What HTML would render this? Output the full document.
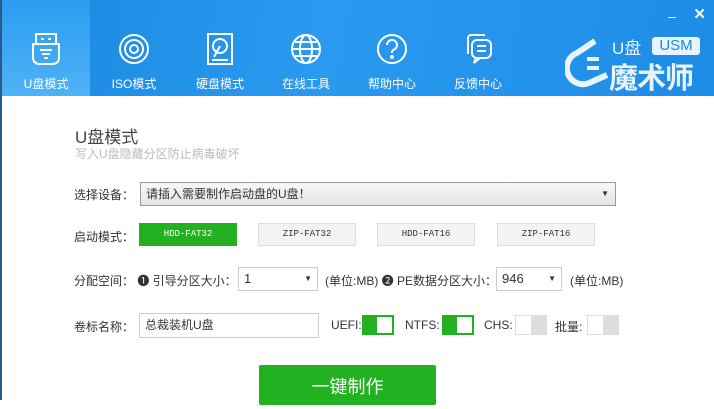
<!DOCTYPE html>
<html><head><meta charset="utf-8"><style>
*{margin:0;padding:0;box-sizing:border-box}
body{width:714px;height:400px;overflow:hidden;background:#fff;font-family:"Liberation Sans","Noto Sans CJK SC",sans-serif;position:relative;border-left:2px solid #2a5a8a}
.hdr{position:absolute;left:0;top:0;width:714px;height:96px;background:linear-gradient(100deg,#1a88e0 0%,#2a9af0 45%,#1c8ce6 100%)}
.tab{position:absolute;top:0;width:88px;height:96px;color:#fff;font-size:12px;text-align:center}
.tab.act{background:linear-gradient(#2b9cf0,#4fb2f6)}
.tab svg{position:absolute;left:28px;top:32px}
.tab span{position:absolute;left:0;right:0;top:75px}
.lbl{position:absolute;font-size:12px;color:#333}
.box{position:absolute;border:1px solid #ccc;background:#fff;font-size:12px;color:#333;padding-left:5px}
.btn{position:absolute;top:223px;width:98px;height:23px;border:1px solid #ddd;background:#f3f3f3;font-family:"Liberation Mono",monospace;font-size:9px;text-align:center;line-height:21px;color:#333}
.tg{position:absolute;top:315px;width:32px;height:20px;background:#21b121}
.tg i{position:absolute;right:2px;top:2px;width:15px;height:16px;background:#fff}
.tg.off{background:#ddd}
.tg.off i{left:0;top:0;width:17px;height:20px;border:1px solid #ddd}
</style></head><body>
<div class="hdr">
<div style="position:absolute;right:40px;top:8px;color:#fff;font-size:14px">–</div>
<div style="position:absolute;right:10px;top:5px;color:#fff;font-size:15px;font-weight:bold">✕</div>
<div class="tab act" style="left:0"><svg width="32" height="34" viewBox="0 0 32 34" fill="none" stroke="#fff" stroke-width="2"><rect x="6" y="2" width="20" height="10"/><path d="M11 7h3M18 7h3M3 12v14a6 6 0 0 0 6 6h14a6 6 0 0 0 6-6V12z"/><path d="M10 18h12M12 22h8M14 26h4"/></svg><span>U盘模式</span></div>
<div class="tab" style="left:88px"><svg width="32" height="34" viewBox="0 0 32 34" fill="none" stroke="#fff" stroke-width="2"><circle cx="16" cy="17" r="14"/><circle cx="16" cy="17" r="9"/><circle cx="16" cy="17" r="4"/></svg><span>ISO模式</span></div>
<div class="tab" style="left:174px"><svg width="32" height="34" viewBox="0 0 32 34" fill="none" stroke="#fff" stroke-width="2"><rect x="4" y="2" width="24" height="30"/><circle cx="16" cy="14" r="7"/><path d="M16 14l-6 11M8 28h16"/></svg><span>硬盘模式</span></div>
<div class="tab" style="left:260px"><svg width="32" height="34" viewBox="0 0 32 34" fill="none" stroke="#fff" stroke-width="2"><circle cx="16" cy="17" r="14"/><ellipse cx="16" cy="17" rx="6" ry="14"/><path d="M2 17h28M5 10h22M5 24h22"/></svg><span>在线工具</span></div>
<div class="tab" style="left:346px"><svg width="32" height="34" viewBox="0 0 32 34" fill="none" stroke="#fff" stroke-width="2"><circle cx="16" cy="17" r="14"/><path d="M11 13a5 5 0 1 1 7 4.5c-1.5 .8-2 1.5-2 3.5"/><circle cx="16" cy="25" r="1" fill="#fff"/></svg><span>帮助中心</span></div>
<div class="tab" style="left:432px"><svg width="32" height="34" viewBox="0 0 32 34" fill="none" stroke="#fff" stroke-width="2"><path d="M6 22V6a3 3 0 0 1 3-3h14"/><rect x="10" y="8" width="19" height="18" rx="5"/><path d="M15 14h9M15 19h9M14 26l-2 5 6-5"/></svg><span>反馈中心</span></div>
<svg style="position:absolute;left:563px;top:35px" width="50" height="55" viewBox="0 0 50 55" fill="none" stroke="#e8f3fd" stroke-width="6"><path d="M30 6L12 18a14 14 0 0 0 12 30l18-8"/><path d="M22 24h12M22 33h12" stroke-width="4"/></svg>
<div style="position:absolute;left:610px;top:34px;color:#e8f3fd;font-size:17px">U盘</div>
<div style="position:absolute;left:650px;top:37px;width:48px;height:18px;background:#e8f3fd;color:#1a88e0;font-size:15px;text-align:center;line-height:18px;border-radius:3px">USM</div>
<div style="position:absolute;left:607px;top:55px;color:#e8f3fd;font-size:29px;font-weight:bold;letter-spacing:-1px">魔术师</div>
</div>
<div style="position:absolute;left:73px;top:123px;font-size:17px;color:#444">U盘模式</div>
<div style="position:absolute;left:73px;top:145px;font-size:12px;color:#bbb">写入U盘隐藏分区防止病毒破坏</div>
<div class="lbl" style="left:72px;top:186px">选择设备：</div>
<div class="box" style="left:138px;top:182px;width:476px;height:24px;background:linear-gradient(#f8f8f8,#e4e4e4);border-color:#999;line-height:22px">请插入需要制作启动盘的U盘！<span style="position:absolute;right:6px;font-size:8px">▼</span></div>
<div class="lbl" style="left:72px;top:228px">启动模式：</div>
<div class="btn" style="left:137px;background:#21b121;border-color:#21b121;color:#fff">HDD-FAT32</div>
<div class="btn" style="left:256px">ZIP-FAT32</div>
<div class="btn" style="left:375px">HDD-FAT16</div>
<div class="btn" style="left:495px">ZIP-FAT16</div>
<div class="lbl" style="left:72px;top:272px">分配空间： ❶ 引导分区大小：</div>
<div class="box" style="left:236px;top:267px;width:80px;height:24px;line-height:22px;font-size:13px">1<span style="position:absolute;right:5px;font-size:8px">▼</span></div>
<div class="lbl" style="left:323px;top:272px">(单位:MB) ❷ PE数据分区大小：</div>
<div class="box" style="left:494px;top:267px;width:66px;height:24px;line-height:22px;font-size:13px">946<span style="position:absolute;right:5px;font-size:8px">▼</span></div>
<div class="lbl" style="left:568px;top:272px">(单位:MB)</div>
<div class="lbl" style="left:72px;top:318px">卷标名称：</div>
<div class="box" style="left:137px;top:313px;width:180px;height:25px;line-height:23px">总裁装机U盘</div>
<div class="lbl" style="left:329px;top:318px">UEFI:</div><div class="tg" style="left:360px"><i></i></div>
<div class="lbl" style="left:403px;top:318px">NTFS:</div><div class="tg" style="left:440px"><i></i></div>
<div class="lbl" style="left:482px;top:318px">CHS:</div><div class="tg off" style="left:513px"><i></i></div>
<div class="lbl" style="left:553px;top:318px">批量:</div><div class="tg off" style="left:585px"><i></i></div>
<div style="position:absolute;left:257px;top:365px;width:177px;height:40px;background:#21b121;border-radius:2px;color:#fff;font-size:18px;text-align:center;line-height:44px">一键制作</div>
</body></html>
